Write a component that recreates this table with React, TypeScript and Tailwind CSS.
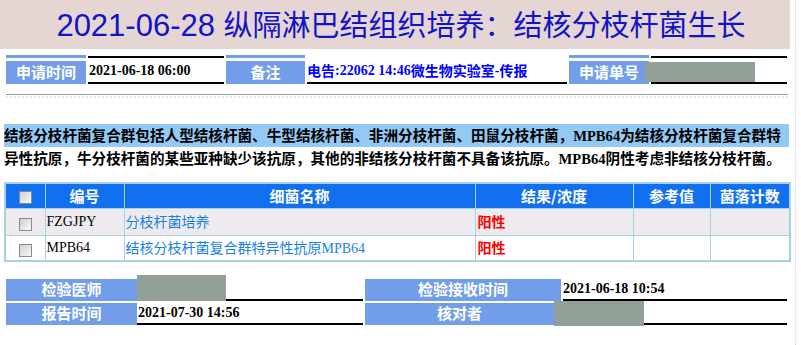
import React from 'react';

const cjk = '"Noto Sans CJK SC", "Liberation Sans", sans-serif';
const serif = '"Liberation Serif", "Noto Sans CJK SC", serif';

function Check() {
  return (
    <span className="inline-block w-[13px] h-[13px] border border-[#8a8a8a] bg-linear-to-br from-[#cfcfcf] to-[#fafafa] align-middle" />
  );
}

function Label({ text, w }: { text: string; w: string }) {
  return (
    <div className={`${w} flex flex-col shrink-0`}>
      <div className="h-[3px] bg-[#729de9]" />
      <div className="flex-1 mt-[3px] bg-[#729de9] flex items-center justify-center text-white font-bold text-[15px]">
        {text}
      </div>
    </div>
  );
}

function Lbl({ text, w }: { text: string; w: string }) {
  return (
    <div className={`${w} h-[22px] shrink-0 bg-[#729de9] flex items-center justify-center text-white font-bold text-[15px]`}>
      {text}
    </div>
  );
}

export default function App() {
  const rows = [
    { code: 'FZGJPY', name: '分枝杆菌培养', result: '阳性', bg: 'bg-[#eeebee]' },
    { code: 'MPB64', name: '结核分枝杆菌复合群特异性抗原MPB64', result: '阳性', bg: 'bg-white' },
  ];

  return (
    <div className="w-[801px] h-[345px] bg-white overflow-hidden" style={{ fontFamily: cjk }}>
      <div className="w-[796px] h-[345px] border-r border-dotted border-[#e4c8e4]">
        {/* title */}
        <div className="w-[790px] h-[49px] bg-[#e6d6d3] flex items-center justify-center pl-[12px]">
          <h1 className="text-[#1212c6] text-[29px] leading-none whitespace-nowrap">
            <span className="text-[31px]" style={{ fontFamily: '"Liberation Sans", sans-serif' }}>2021-06-28 </span>
            纵隔淋巴结组织培养：结核分枝杆菌生长
          </h1>
        </div>

        {/* request info */}
        <div className="flex gap-[2px] pl-[6px] mt-[6px] h-[29px]">
          <Label text="申请时间" w="w-[80px]" />
          <div className="w-[136px] mt-[1px] border-y-2 border-black flex items-center pl-[1px] font-bold text-[14px] text-black" style={{ fontFamily: serif }}>
            2021-06-18 06:00
          </div>
          <Label text="备注" w="w-[79px]" />
          <div className="w-[260px] border-b-2 border-black flex items-center pt-[4px] font-bold text-[14px] text-[#0000ff] whitespace-nowrap" style={{ fontFamily: serif }}>
            <span style={{ fontFamily: cjk }}>电告</span>:22062 14:46<span style={{ fontFamily: cjk }}>微生物实验室</span>-<span style={{ fontFamily: cjk }}>传报</span>
          </div>
          <Label text="申请单号" w="w-[80px]" />
          <div className="relative w-[136px] mt-[1px] border-y-2 border-black">
            <div className="absolute left-[-6px] top-[4px] w-[110px] h-[20px] bg-[#93a097]" />
          </div>
        </div>

        {/* divider */}
        <div className="ml-[6px] mt-[10px] w-[782px] border-t border-[#9a9a9a]" />
        <div className="ml-[6px] mt-[1px] w-[782px] border-t-2 border-dotted border-[#f4dcf2]" />

        {/* description */}
        <div className="ml-[4px] mt-[26px] text-[14.6px] font-bold text-black leading-[22px] whitespace-nowrap">
          <div className="w-[785px] bg-[#93c9f2]">
            结核分枝杆菌复合群包括人型结核杆菌、牛型结核杆菌、非洲分枝杆菌、田鼠分枝杆菌，<span style={{ fontFamily: serif }}>MPB64</span>为结核分枝杆菌复合群特
          </div>
          <div>
            异性抗原，牛分枝杆菌的某些亚种缺少该抗原，其他的非结核分枝杆菌不具备该抗原。<span style={{ fontFamily: serif }}>MPB64</span>阴性考虑非结核分枝杆菌。
          </div>
        </div>

        {/* result table */}
        <table className="ml-[4px] mt-[12px] w-[785px] border-collapse border-2 border-[#a9d0e6] table-fixed">
          <colgroup>
            <col className="w-[40px]" />
            <col className="w-[79px]" />
            <col className="w-[351px]" />
            <col className="w-[158px]" />
            <col className="w-[77px]" />
            <col className="w-[80px]" />
          </colgroup>
          <thead>
            <tr className="h-[25px] bg-[#1170f0] text-white font-bold text-[15px]">
              <th className="border border-[#a9d0e6] font-bold"><Check /></th>
              <th className="border border-[#a9d0e6] font-bold">编号</th>
              <th className="border border-[#a9d0e6] font-bold">细菌名称</th>
              <th className="border border-[#a9d0e6] font-bold">结果/浓度</th>
              <th className="border border-[#a9d0e6] font-bold">参考值</th>
              <th className="border border-[#a9d0e6] font-bold">菌落计数</th>
            </tr>
          </thead>
          <tbody>
            {rows.map((r, i) => (
              <tr key={r.code} className={`${i === 0 ? 'h-[27px]' : 'h-[25px]'} ${r.bg}`}>
                <td className="border border-[#a9d0e6] text-center"><Check /></td>
                <td className="border border-[#a9d0e6] pl-[1px] text-[14px] text-black" style={{ fontFamily: serif }}>{r.code}</td>
                <td className="border border-[#a9d0e6] pl-[1px] text-[14px] text-[#1a7fe8] whitespace-nowrap">
                  {r.name.replace('MPB64', '')}
                  {r.name.includes('MPB64') && <span style={{ fontFamily: serif }}>MPB64</span>}
                </td>
                <td className="border border-[#a9d0e6] pl-[2px] text-[14px] font-bold text-[#ff0000]">{r.result}</td>
                <td className="border border-[#a9d0e6]" />
                <td className="border border-[#a9d0e6]" />
              </tr>
            ))}
          </tbody>
        </table>

        {/* sign-off */}
        <div className="pl-[6px] mt-[17px] flex flex-col gap-[2px]">
          <div className="flex h-[22px]">
            <Lbl text="检验医师" w="w-[131px]" />
            <div className="relative w-[226px] border-b-2 border-black">
              <div className="absolute left-0 top-[-4px] w-[89px] h-[26px] bg-[#93a097]" />
            </div>
            <div className="w-[2px]" />
            <Lbl text="检验接收时间" w="w-[196px]" />
            <div className="w-[2px]" />
            <div className="w-[224px] border-b-2 border-black flex items-center font-bold text-[14px] text-black" style={{ fontFamily: serif }}>
              2021-06-18 10:54
            </div>
          </div>
          <div className="flex h-[22px]">
            <Lbl text="报告时间" w="w-[131px]" />
            <div className="w-[226px] border-b-2 border-black flex items-center pl-[1px] font-bold text-[14px] text-black" style={{ fontFamily: serif }}>
              2021-07-30 14:56
            </div>
            <div className="w-[2px]" />
            <Lbl text="核对者" w="w-[189px]" />
            <div className="relative w-[233px] border-b-2 border-black">
              <div className="absolute left-0 top-[-2px] w-[90px] h-[25px] bg-[#93a097]" />
            </div>
          </div>
        </div>
      </div>
    </div>
  );
}
